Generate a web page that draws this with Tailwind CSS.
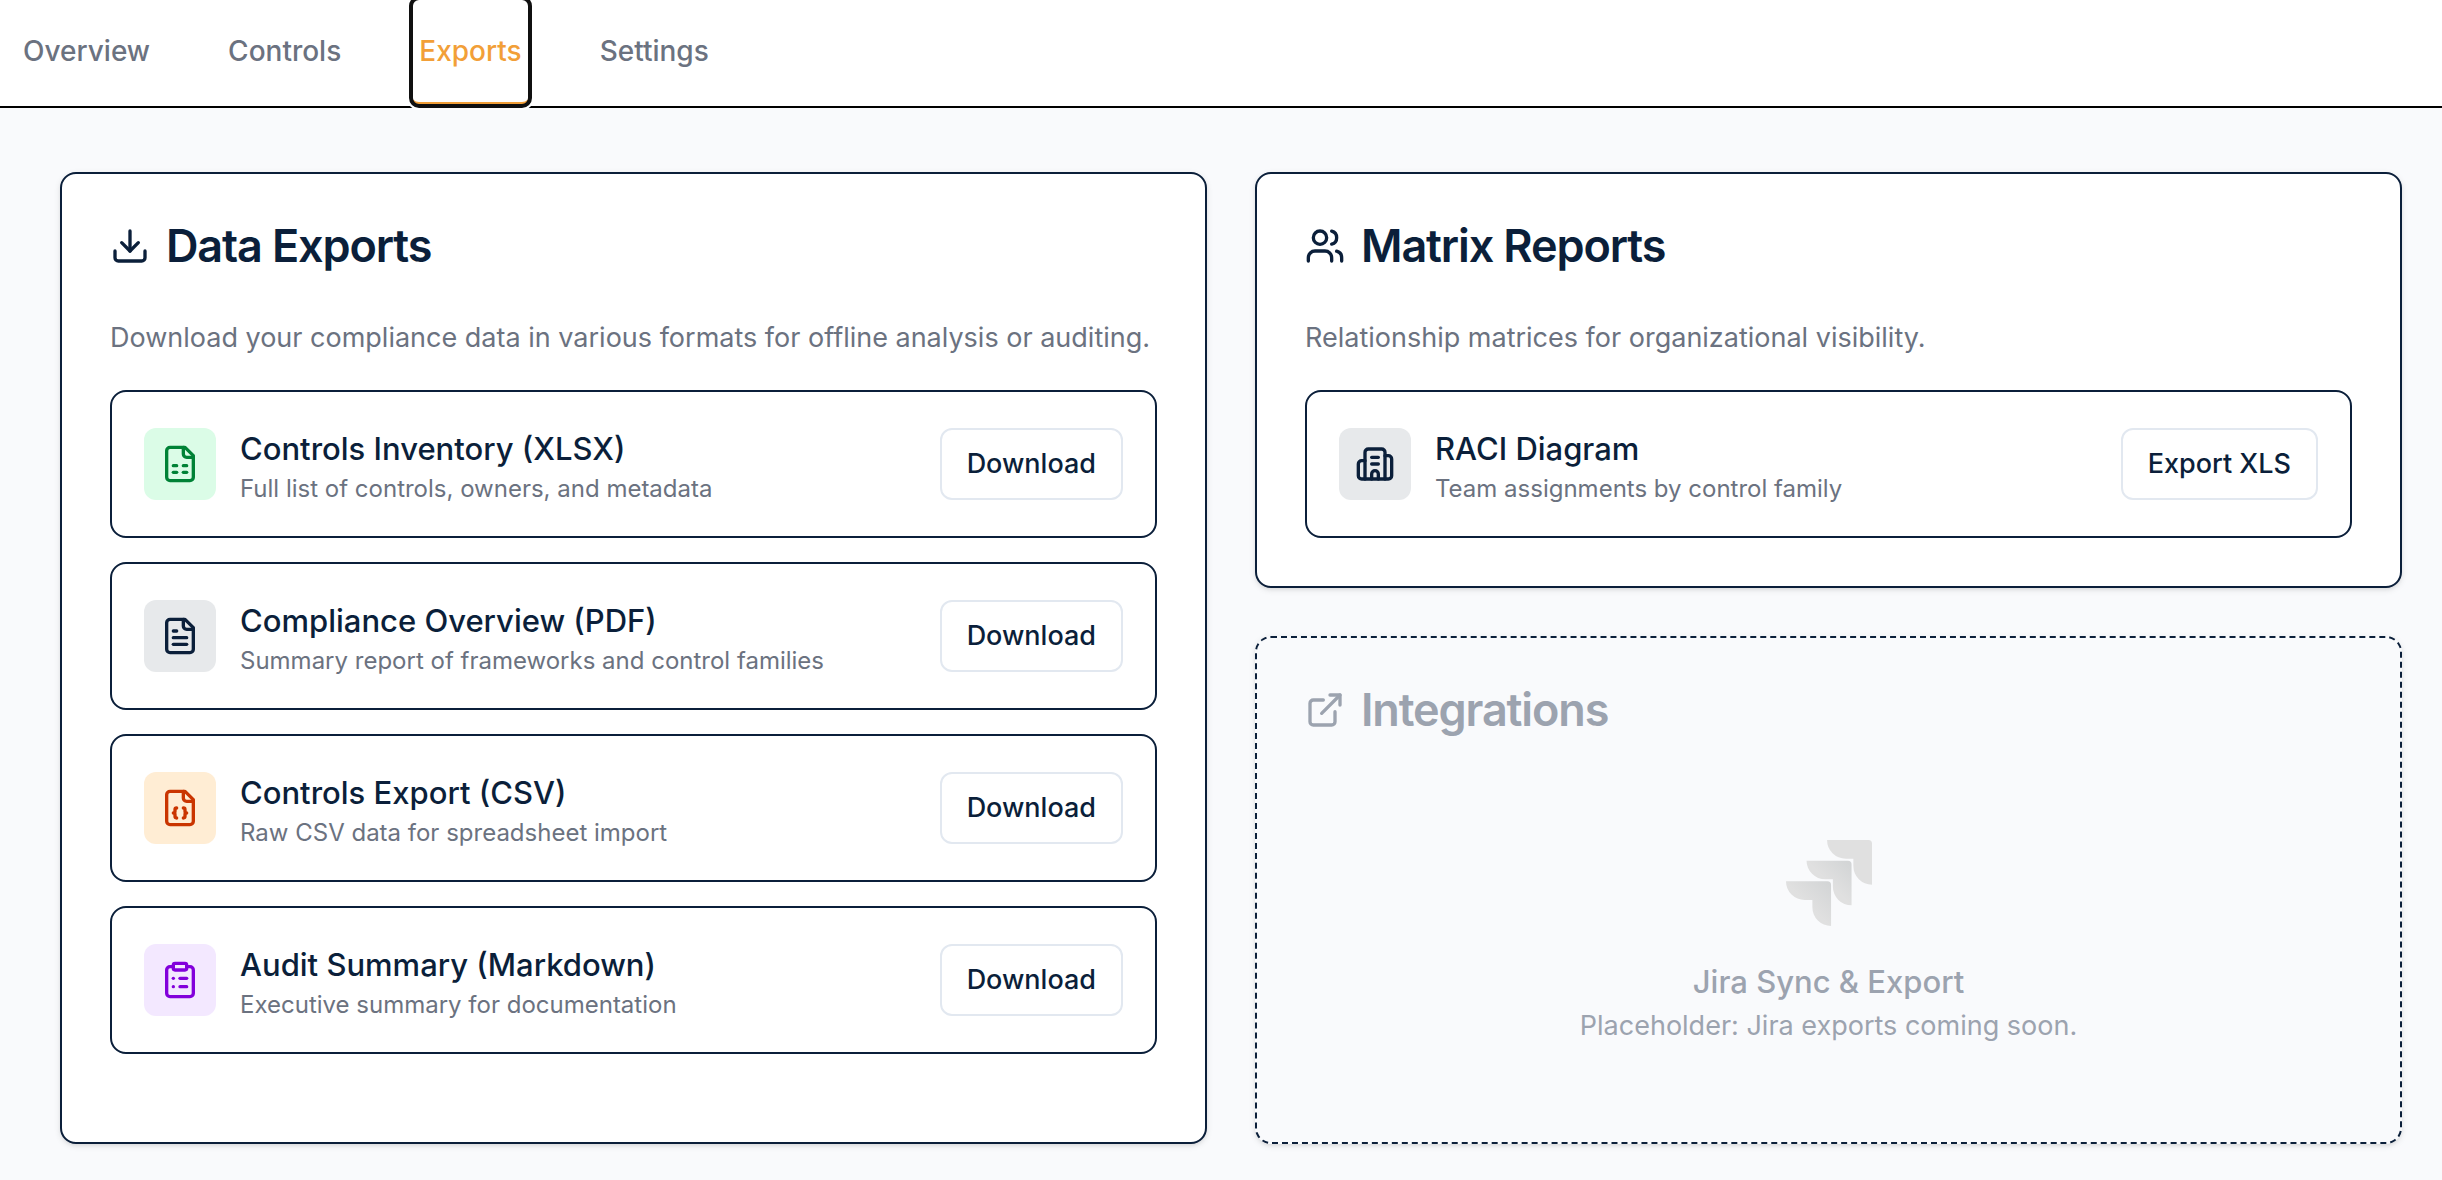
<!DOCTYPE html>
<html lang="en">

<head>
    <meta charset="UTF-8">
    <meta name="viewport" content="width=device-width, initial-scale=1.0">
    <title>Compliance Exports</title>
    <script src="https://cdn.jsdelivr.net/npm/@tailwindcss/browser@4"></script>
</head>

<body class="min-h-screen bg-[#f9fafc] font-['Inter',sans-serif] text-[#0b1f3a]">

<!-- Tabs -->
<nav class="flex gap-[62px] border-b-2 border-black bg-white px-[15px] text-[28px] leading-10 font-medium text-[#6b7280]">
    <button class="h-[106px] px-2 pb-1">Overview</button>
    <button class="h-[106px] px-2 pb-1">Controls</button>
    <button class="relative z-10 -mt-0.5 h-[108px] rounded-lg px-2 pb-0.5 text-[#f29f38] shadow-[inset_0_-4px_0_#f29f38] ring-4 ring-white outline-4 -outline-offset-2 outline-[#101010]">Exports</button>
    <button class="h-[106px] px-2 pb-1">Settings</button>
</nav>

<main class="grid grid-cols-2 gap-12 pt-16 pr-10 pb-9 pl-[60px]">

    <!-- Data exports -->
    <section class="rounded-2xl border-2 border-[#0b1f3a] bg-white p-12 shadow-[0_2px_6px_rgb(0_0_0/0.1),0_2px_4px_-2px_rgb(0_0_0/0.1)]">
        <h2 class="flex items-center gap-4 text-[45px] leading-12 font-semibold tracking-tight">
            <svg class="size-10" viewBox="0 0 24 24" fill="none" stroke="currentColor" stroke-width="2" stroke-linecap="round" stroke-linejoin="round"><path d="M12 15V3" /><path d="M21 15v4a2 2 0 0 1-2 2H5a2 2 0 0 1-2-2v-4" /><path d="m7 10 5 5 5-5" /></svg>
            Data Exports
        </h2>
        <p class="mt-12 text-[27px] leading-10 whitespace-nowrap text-[#6b7280]">Download your compliance data in various formats for offline analysis or auditing.</p>

        <ul class="mt-8 space-y-6">
            <li class="flex items-center gap-6 rounded-2xl border-2 border-[#0b1f3a] p-8">
                <div class="rounded-xl bg-green-100 p-4 text-green-700">
                    <svg class="size-10" viewBox="0 0 24 24" fill="none" stroke="currentColor" stroke-width="2" stroke-linecap="round" stroke-linejoin="round"><path d="M15 2H6a2 2 0 0 0-2 2v16a2 2 0 0 0 2 2h12a2 2 0 0 0 2-2V7Z" /><path d="M14 2v4a2 2 0 0 0 2 2h4" /><path d="M8 13h2" /><path d="M14 13h2" /><path d="M8 17h2" /><path d="M14 17h2" /></svg>
                </div>
                <div class="flex-1">
                    <h3 class="text-[31px] leading-[50px] font-medium">Controls Inventory (XLSX)</h3>
                    <p class="text-2xl leading-[30px] text-[#6b7280]">Full list of controls, owners, and metadata</p>
                </div>
                <button class="h-[72px] rounded-xl border-2 border-slate-200 px-[25px] text-[27px] leading-10 font-medium">Download</button>
            </li>
            <li class="flex items-center gap-6 rounded-2xl border-2 border-[#0b1f3a] p-8">
                <div class="rounded-xl bg-[#e7e9eb] p-4">
                    <svg class="size-10" viewBox="0 0 24 24" fill="none" stroke="currentColor" stroke-width="2" stroke-linecap="round" stroke-linejoin="round"><path d="M15 2H6a2 2 0 0 0-2 2v16a2 2 0 0 0 2 2h12a2 2 0 0 0 2-2V7Z" /><path d="M14 2v4a2 2 0 0 0 2 2h4" /><path d="M10 9H8" /><path d="M16 13H8" /><path d="M16 17H8" /></svg>
                </div>
                <div class="flex-1">
                    <h3 class="text-[31px] leading-[50px] font-medium">Compliance Overview (PDF)</h3>
                    <p class="text-2xl leading-[30px] text-[#6b7280]">Summary report of frameworks and control families</p>
                </div>
                <button class="h-[72px] rounded-xl border-2 border-slate-200 px-[25px] text-[27px] leading-10 font-medium">Download</button>
            </li>
            <li class="flex items-center gap-6 rounded-2xl border-2 border-[#0b1f3a] p-8">
                <div class="rounded-xl bg-orange-100 p-4 text-orange-700">
                    <svg class="size-10" viewBox="0 0 24 24" fill="none" stroke="currentColor" stroke-width="2" stroke-linecap="round" stroke-linejoin="round"><path d="M15 2H6a2 2 0 0 0-2 2v16a2 2 0 0 0 2 2h12a2 2 0 0 0 2-2V7Z" /><path d="M14 2v4a2 2 0 0 0 2 2h4" /><path d="M10 12a1 1 0 0 0-1 1v1a1 1 0 0 1-1 1 1 1 0 0 1 1 1v1a1 1 0 0 0 1 1" /><path d="M14 18a1 1 0 0 0 1-1v-1a1 1 0 0 1 1-1 1 1 0 0 1-1-1v-1a1 1 0 0 0-1-1" /></svg>
                </div>
                <div class="flex-1">
                    <h3 class="text-[31px] leading-[50px] font-medium">Controls Export (CSV)</h3>
                    <p class="text-2xl leading-[30px] text-[#6b7280]">Raw CSV data for spreadsheet import</p>
                </div>
                <button class="h-[72px] rounded-xl border-2 border-slate-200 px-[25px] text-[27px] leading-10 font-medium">Download</button>
            </li>
            <li class="flex items-center gap-6 rounded-2xl border-2 border-[#0b1f3a] p-8">
                <div class="rounded-xl bg-purple-100 p-4 text-purple-700">
                    <svg class="size-10" viewBox="0 0 24 24" fill="none" stroke="currentColor" stroke-width="2" stroke-linecap="round" stroke-linejoin="round"><rect width="8" height="4" x="8" y="2" rx="1" ry="1" /><path d="M16 4h2a2 2 0 0 1 2 2v14a2 2 0 0 1-2 2H6a2 2 0 0 1-2-2V6a2 2 0 0 1 2-2h2" /><path d="M12 11h4" /><path d="M12 16h4" /><path d="M8 11h.01" /><path d="M8 16h.01" /></svg>
                </div>
                <div class="flex-1">
                    <h3 class="text-[31px] leading-[50px] font-medium">Audit Summary (Markdown)</h3>
                    <p class="text-2xl leading-[30px] text-[#6b7280]">Executive summary for documentation</p>
                </div>
                <button class="h-[72px] rounded-xl border-2 border-slate-200 px-[25px] text-[27px] leading-10 font-medium">Download</button>
            </li>
        </ul>
    </section>

    <div class="flex flex-col gap-12">
        <!-- Matrix reports -->
        <section class="rounded-2xl border-2 border-[#0b1f3a] bg-white p-12 shadow-[0_2px_6px_rgb(0_0_0/0.1),0_2px_4px_-2px_rgb(0_0_0/0.1)]">
            <h2 class="flex items-center gap-4 text-[45px] leading-12 font-semibold tracking-tight">
                <svg class="size-10" viewBox="0 0 24 24" fill="none" stroke="currentColor" stroke-width="2" stroke-linecap="round" stroke-linejoin="round"><path d="M16 21v-2a4 4 0 0 0-4-4H6a4 4 0 0 0-4 4v2" /><path d="M16 3.128a4 4 0 0 1 0 7.744" /><path d="M22 21v-2a4 4 0 0 0-3-3.87" /><circle cx="9" cy="7" r="4" /></svg>
                Matrix Reports
            </h2>
            <p class="mt-12 text-[27px] leading-10 text-[#6b7280]">Relationship matrices for organizational visibility.</p>

            <div class="mt-8 flex items-center gap-6 rounded-2xl border-2 border-[#0b1f3a] p-8">
                <div class="rounded-xl bg-[#e7e9eb] p-4">
                    <svg class="size-10" viewBox="0 0 24 24" fill="none" stroke="currentColor" stroke-width="2" stroke-linecap="round" stroke-linejoin="round"><path d="M10 12h4" /><path d="M10 8h4" /><path d="M14 21v-3a2 2 0 0 0-4 0v3" /><path d="M6 10H4a2 2 0 0 0-2 2v7a2 2 0 0 0 2 2h16a2 2 0 0 0 2-2V9a2 2 0 0 0-2-2h-2" /><path d="M6 21V5a2 2 0 0 1 2-2h8a2 2 0 0 1 2 2v16" /></svg>
                </div>
                <div class="flex-1">
                    <h3 class="text-[31px] leading-[50px] font-medium">RACI Diagram</h3>
                    <p class="text-2xl leading-[30px] text-[#6b7280]">Team assignments by control family</p>
                </div>
                <button class="h-[72px] rounded-xl border-2 border-slate-200 px-[25px] text-[27px] leading-10 font-medium">Export XLS</button>
            </div>
        </section>

        <!-- Integrations, not available yet -->
        <section class="rounded-2xl border-2 border-dashed border-[#0b1f3a] bg-[#f9fafc] p-12 text-[#9ca3af] shadow-[0_2px_6px_rgb(0_0_0/0.1),0_2px_4px_-2px_rgb(0_0_0/0.1)]">
            <h2 class="flex items-center gap-4 text-[45px] leading-12 font-semibold tracking-tight">
                <svg class="size-10" viewBox="0 0 24 24" fill="none" stroke="currentColor" stroke-width="2" stroke-linecap="round" stroke-linejoin="round"><path d="M15 3h6v6" /><path d="M10 14 21 3" /><path d="M18 13v6a2 2 0 0 1-2 2H5a2 2 0 0 1-2-2V8a2 2 0 0 1 2-2h6" /></svg>
                Integrations
            </h2>
            <div class="mt-12 flex flex-col items-center py-12 text-center">
                <svg class="mt-2.5 mb-8 size-[86px]" viewBox="0 0 24 24" fill="#e0e0e0">
                    <defs>
                        <linearGradient id="jira-mid" x1="18" y1="6" x2="12" y2="12" gradientUnits="userSpaceOnUse"><stop offset="0.1" stop-color="#d3d5d6" /><stop offset="1" stop-color="#e0e0e0" /></linearGradient>
                        <linearGradient id="jira-low" x1="12.5" y1="11.5" x2="6" y2="18" gradientUnits="userSpaceOnUse"><stop offset="0.1" stop-color="#d3d5d6" /><stop offset="1" stop-color="#e0e0e0" /></linearGradient>
                    </defs>
                    <path fill="url(#jira-low)" d="M11.571 11.513H0a5.218 5.218 0 0 0 5.232 5.215h2.13v2.057A5.215 5.215 0 0 0 12.575 24V12.518a1.005 1.005 0 0 0-1.005-1.005z" />
                    <path fill="url(#jira-mid)" d="M17.294 5.757H5.736a5.215 5.215 0 0 0 5.215 5.214h2.129v2.058a5.218 5.218 0 0 0 5.215 5.214V6.758a1.001 1.001 0 0 0-1.001-1.001z" />
                    <path d="M23.013 0H11.455a5.215 5.215 0 0 0 5.215 5.215h2.129v2.057A5.215 5.215 0 0 0 24 12.483V1.005A1.001 1.001 0 0 0 23.013 0z" />
                </svg>
                <h3 class="text-[31px] leading-[48px] font-medium">Jira Sync &amp; Export</h3>
                <p class="text-[27px] leading-10">Placeholder: Jira exports coming soon.</p>
            </div>
        </section>
    </div>

</main>

</body>
</html>
